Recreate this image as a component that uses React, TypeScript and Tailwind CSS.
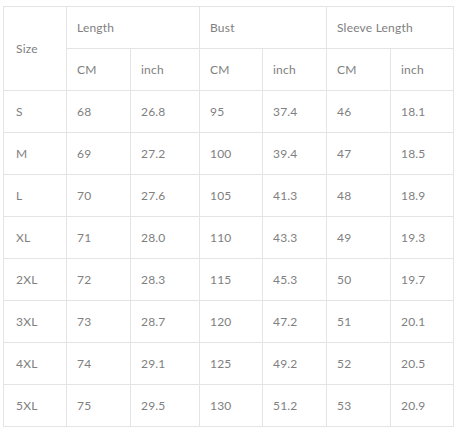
const rows = [
  ['S', '68', '26.8', '95', '37.4', '46', '18.1'],
  ['M', '69', '27.2', '100', '39.4', '47', '18.5'],
  ['L', '70', '27.6', '105', '41.3', '48', '18.9'],
  ['XL', '71', '28.0', '110', '43.3', '49', '19.3'],
  ['2XL', '72', '28.3', '115', '45.3', '50', '19.7'],
  ['3XL', '73', '28.7', '120', '47.2', '51', '20.1'],
  ['4XL', '74', '29.1', '125', '49.2', '52', '20.5'],
  ['5XL', '75', '29.5', '130', '51.2', '53', '20.9'],
];

const widths = [63, 64, 69, 63, 64, 64, 63];

const cell = 'border border-[#e4e4e4] h-[42px] px-[10px] text-left align-middle font-normal';
const first = 'border border-[#e4e4e4] h-[42px] pl-[12px] pr-[8px] text-left align-middle font-normal';

export default function App() {
  return (
    <div className="w-[460px] h-[432px] bg-white pt-[6px] pl-[3px] font-['Lato','Liberation_Sans',sans-serif] text-[12px] tracking-[0.2px] text-[#808080]">
      <table className="table-fixed border-collapse w-[451px]">
        <colgroup>
          {widths.map((w, i) => (
            <col key={i} style={{ width: w }} />
          ))}
        </colgroup>
        <thead>
          <tr>
            <th rowSpan={2} className={first}>Size</th>
            <th colSpan={2} className={cell}>Length</th>
            <th colSpan={2} className={cell}>Bust</th>
            <th colSpan={2} className={cell}>Sleeve Length</th>
          </tr>
          <tr>
            <th className={cell}>CM</th>
            <th className={cell}>inch</th>
            <th className={cell}>CM</th>
            <th className={cell}>inch</th>
            <th className={cell}>CM</th>
            <th className={cell}>inch</th>
          </tr>
        </thead>
        <tbody>
          {rows.map((r) => (
            <tr key={r[0]}>
              {r.map((v, i) => (
                <td key={i} className={i === 0 ? first : cell}>{v}</td>
              ))}
            </tr>
          ))}
        </tbody>
      </table>
    </div>
  );
}
